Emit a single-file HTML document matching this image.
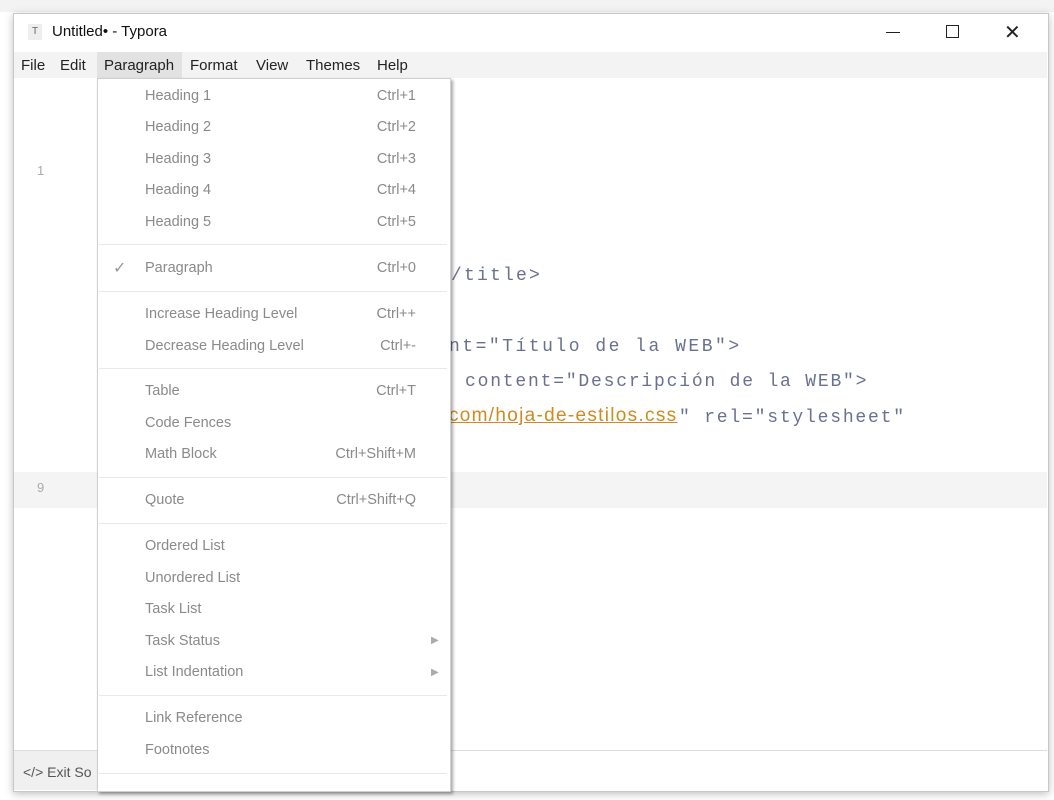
<!DOCTYPE html>
<html><head><meta charset="utf-8"><style>
body{margin:0;width:1054px;height:800px;background:#fff;position:relative;overflow:hidden;font-family:"Liberation Sans",sans-serif}
.a{position:absolute}
.win{left:13px;top:13px;width:1034px;height:777px;border:1px solid #c8c8c8;box-shadow:0 2px 8px rgba(0,0,0,.25);background:#fff}
.mi{position:absolute;font-size:15px;color:#222;top:57px}
.it{position:absolute;left:145px;font-size:14.5px;color:#8a8a8a}
.sc{position:absolute;right:638px;font-size:14.5px;color:#8a8a8a;text-align:right}
.sep{position:absolute;left:99px;width:348px;height:1px;background:#e8e8e8}
.code{position:absolute;font-family:"Liberation Mono",monospace;font-size:18px;color:#6a7090;white-space:pre;letter-spacing:1.8px}
</style></head><body>
<div class="a" style="left:0;top:0;width:1054px;height:12px;background:#f3f3f3"></div>
<div class="a win"></div>
<div class="a" style="left:28px;top:24px;width:14px;height:16px;background:#eee;font-size:10px;color:#666;text-align:center;line-height:16px">T</div>
<div class="a" style="left:52px;top:23px;font-size:15px;color:#111">Untitled• - Typora</div>
<div class="a" style="left:886px;top:32px;width:14px;height:1px;background:#222"></div>
<div class="a" style="left:946px;top:25px;width:11px;height:11px;border:1px solid #222"></div>
<div class="a" style="left:1004px;top:20px;font-size:20px;color:#222">✕</div>
<div class="a" style="left:14px;top:52px;width:1033px;height:26px;background:#f3f3f3"></div>
<div class="a" style="left:97px;top:52px;width:85px;height:26px;background:#e2e2e2"></div>
<div class="mi" style="left:21px">File</div><div class="mi" style="left:60px">Edit</div>
<div class="mi" style="left:104px">Paragraph</div><div class="mi" style="left:190px">Format</div>
<div class="mi" style="left:256px">View</div><div class="mi" style="left:306px">Themes</div><div class="mi" style="left:377px">Help</div>
<div class="a" style="left:37px;top:163px;font-size:13px;color:#aaa">1</div>
<div class="a" style="left:14px;top:472px;width:1033px;height:36px;background:#f4f4f4"></div>
<div class="a" style="left:37px;top:480px;font-size:13px;color:#aaa">9</div>
<div class="code" style="left:451px;top:266px;letter-spacing:2.2px">/title></div>
<div class="code" style="left:449px;top:337px;letter-spacing:2.5px">nt="Título de la WEB"></div>
<div class="code" style="left:465px;top:372px">content="Descripción de la WEB"></div>
<div class="a" style="left:449px;top:405px;font-size:19px;color:#d08a20;text-decoration:underline;letter-spacing:1.3px">com/hoja-de-estilos.css</div>
<div class="code" style="left:679px;top:408px">" rel="stylesheet"</div>
<div class="a" style="left:14px;top:750px;width:1033px;height:1px;background:#ddd"></div>
<div class="a" style="left:14px;top:751px;width:84px;height:39px;background:#f0f0f0"></div>
<div class="a" style="left:23px;top:764px;font-size:14px;color:#555">&lt;/&gt; Exit So</div>
<div class="a" style="left:97px;top:78px;width:352px;height:712px;background:#fff;border:1px solid #d0d0d0;box-shadow:2px 2px 3px rgba(0,0,0,.35)"></div>
<div class="it" style="top:88px">Heading 1</div><div class="sc" style="top:88px">Ctrl+1</div>
<div class="it" style="top:119px">Heading 2</div><div class="sc" style="top:119px">Ctrl+2</div>
<div class="it" style="top:151px">Heading 3</div><div class="sc" style="top:151px">Ctrl+3</div>
<div class="it" style="top:182px">Heading 4</div><div class="sc" style="top:182px">Ctrl+4</div>
<div class="it" style="top:214px">Heading 5</div><div class="sc" style="top:214px">Ctrl+5</div>
<div class="sep" style="top:244px"></div>
<div class="a" style="left:113px;top:258px;font-size:16px;color:#999">✓</div>
<div class="it" style="top:260px">Paragraph</div><div class="sc" style="top:260px">Ctrl+0</div>
<div class="sep" style="top:291px"></div>
<div class="it" style="top:306px">Increase Heading Level</div><div class="sc" style="top:306px">Ctrl++</div>
<div class="it" style="top:338px">Decrease Heading Level</div><div class="sc" style="top:338px">Ctrl+-</div>
<div class="sep" style="top:368px"></div>
<div class="it" style="top:383px">Table</div><div class="sc" style="top:383px">Ctrl+T</div>
<div class="it" style="top:415px">Code Fences</div>
<div class="it" style="top:446px">Math Block</div><div class="sc" style="top:446px">Ctrl+Shift+M</div>
<div class="sep" style="top:477px"></div>
<div class="it" style="top:492px">Quote</div><div class="sc" style="top:492px">Ctrl+Shift+Q</div>
<div class="sep" style="top:523px"></div>
<div class="it" style="top:538px">Ordered List</div>
<div class="it" style="top:570px">Unordered List</div>
<div class="it" style="top:601px">Task List</div>
<div class="it" style="top:633px">Task Status</div><div class="a" style="left:431px;top:635px;font-size:10px;color:#aaa">▶</div>
<div class="it" style="top:664px">List Indentation</div><div class="a" style="left:431px;top:667px;font-size:10px;color:#aaa">▶</div>
<div class="sep" style="top:695px"></div>
<div class="it" style="top:710px">Link Reference</div>
<div class="it" style="top:742px">Footnotes</div>
<div class="sep" style="top:773px"></div>
</body></html>
